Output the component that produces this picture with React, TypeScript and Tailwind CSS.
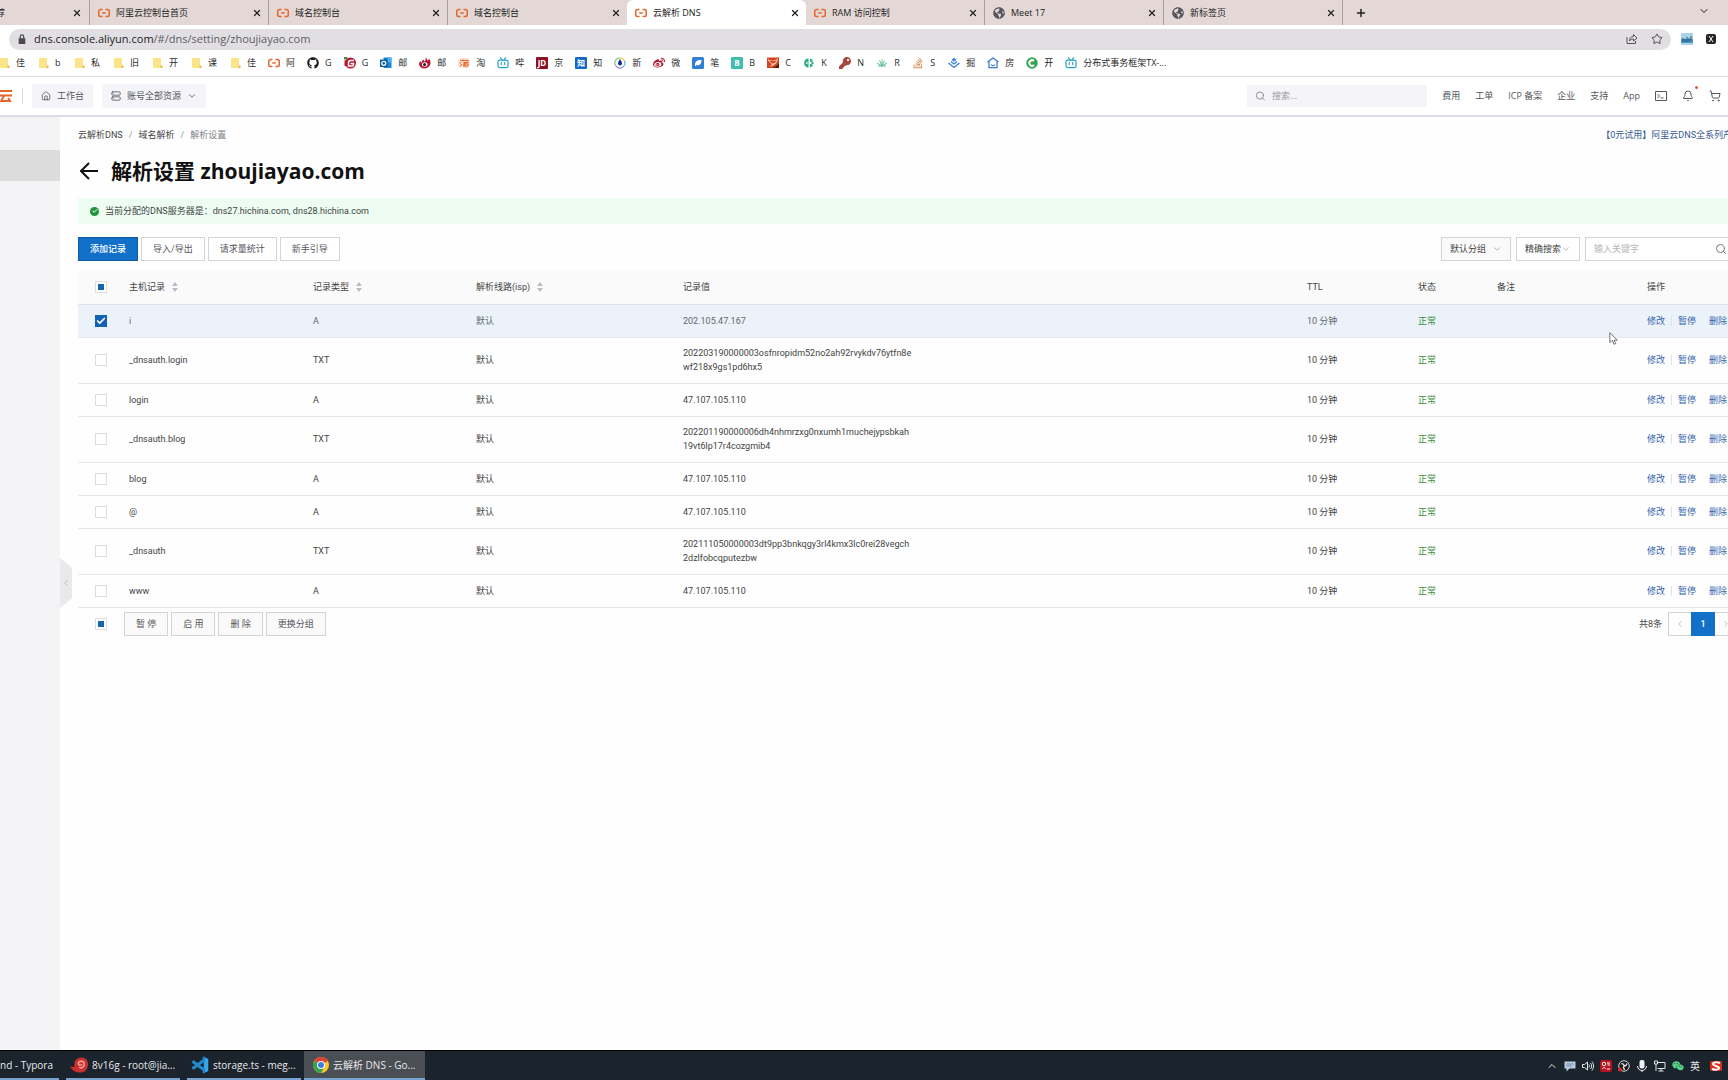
import { useState } from 'react';
import type { ReactNode } from 'react';
import {
  Bell,
  Check,
  ChevronDown,
  ChevronLeft,
  ChevronRight,
  ChevronUp,
  House,
  Plus,
  Search,
  Server,
  ShoppingCart,
  Star,
  X,
} from 'lucide-react';
import { FaGithub, FaWeibo, FaStackOverflow, FaGlobeAmericas, FaWeixin, FaKey } from 'react-icons/fa';

interface TabItem {
  title: string;
  icon: 'ali' | 'globe';
  active?: boolean;
}

interface DnsRecord {
  host: string;
  type: string;
  value: string[];
}

const TABS: TabItem[] = [
  { title: '阿里云控制台首页', icon: 'ali' },
  { title: '域名控制台', icon: 'ali' },
  { title: '域名控制台', icon: 'ali' },
  { title: '云解析 DNS', icon: 'ali', active: true },
  { title: 'RAM 访问控制', icon: 'ali' },
  { title: 'Meet 17', icon: 'globe' },
  { title: '新标签页', icon: 'globe' },
];

const RECORDS: DnsRecord[] = [
  { host: 'i', type: 'A', value: ['202.105.47.167'] },
  {
    host: '_dnsauth.login',
    type: 'TXT',
    value: ['202203190000003osfnropidm52no2ah92rvykdv76ytfn8e', 'wf218x9gs1pd6hx5'],
  },
  { host: 'login', type: 'A', value: ['47.107.105.110'] },
  {
    host: '_dnsauth.blog',
    type: 'TXT',
    value: ['202201190000006dh4nhmrzxg0nxumh1muchejypsbkah', '19vt6lp17r4cozgmib4'],
  },
  { host: 'blog', type: 'A', value: ['47.107.105.110'] },
  { host: '@', type: 'A', value: ['47.107.105.110'] },
  {
    host: '_dnsauth',
    type: 'TXT',
    value: ['202111050000003dt9pp3bnkqgy3rl4kmx3lc0rei28vegch', '2dzlfobcqputezbw'],
  },
  { host: 'www', type: 'A', value: ['47.107.105.110'] },
];

const HEADER_LINKS = ['费用', '工单', 'ICP 备案', '企业', '支持', 'App'];

function AliIcon() {
  return (
    <svg viewBox="0 0 24 24" className="size-3 shrink-0" fill="none" stroke="#e8662c" strokeWidth="3" aria-hidden="true">
      <path d="M9 5H5a3.5 3.5 0 0 0-3.5 3.5v7A3.5 3.5 0 0 0 5 19h4M15 5h4a3.5 3.5 0 0 1 3.5 3.5v7A3.5 3.5 0 0 1 19 19h-4M8.500 12h7" />
    </svg>
  );
}

function FolderIcon() {
  return (
    <svg viewBox="0 0 12 12" className="size-3 shrink-0" aria-hidden="true">
      <path d="M2 1h8v8h1v2H2z" fill="#fbe58a" />
      <path d="M9.500 8.500H11.500V11H9.500z" fill="#e3bd4e" />
    </svg>
  );
}

function BiliIcon() {
  return (
    <svg viewBox="0 0 24 24" className="size-3 shrink-0" fill="none" stroke="#2ba3c9" strokeWidth="2.500" aria-hidden="true">
      <rect x="2" y="6" width="20" height="15" rx="3" />
      <path d="M7 1.500 10 6M17 1.500 14 6M8.500 11v4M15.500 11v4" strokeLinecap="round" />
    </svg>
  );
}

// Square or round site badge with a one or two character mark
function Badge({ text, color, round = false }: { text: string; color: string; round?: boolean }) {
  return (
    <svg viewBox="0 0 12 12" className="size-3 shrink-0" aria-hidden="true">
      <rect width="12" height="12" rx={round ? 6 : 1} fill={color} />
      <text x="6" y="9" fontSize="8" fontWeight="700" fill="#fff" textAnchor="middle">
        {text}
      </text>
    </svg>
  );
}

function Glyph({ children }: { children: ReactNode }) {
  return (
    <svg viewBox="0 0 24 24" className="size-3 shrink-0" fill="none" aria-hidden="true">
      {children}
    </svg>
  );
}

const BOOKMARKS: { label: string; icon: ReactNode }[] = [
  { label: '佳', icon: <FolderIcon /> },
  { label: 'b', icon: <FolderIcon /> },
  { label: '私', icon: <FolderIcon /> },
  { label: '旧', icon: <FolderIcon /> },
  { label: '开', icon: <FolderIcon /> },
  { label: '课', icon: <FolderIcon /> },
  { label: '佳', icon: <FolderIcon /> },
  { label: '阿', icon: <AliIcon /> },
  { label: 'G', icon: <FaGithub className="size-3 shrink-0 text-[#1b1f23]" /> },
  {
    label: 'G',
    icon: (
      <Glyph>
        <circle cx="13" cy="12" r="11" fill="#b8142f" />
        <path d="M20 7h-7a4 4 0 0 0-4 4v7h7a3 3 0 0 0 3-3v-2h-6" stroke="#fff" strokeWidth="3" />
        <path d="M0 0h7v5H0z" fill="#4f8b3c" />
        <path d="M1 7h5v11H1z" fill="#b8142f" />
      </Glyph>
    ),
  },
  {
    label: '邮',
    icon: (
      <Glyph>
        <path d="M7 1h16v21H7z" fill="#1b86cf" />
        <path d="M15 1h8v10h-8z" fill="#4bb5ee" />
        <path d="M0 5h15v15H0z" fill="#0b5a9c" />
        <circle cx="7.500" cy="12.500" r="4" stroke="#fff" strokeWidth="2.500" />
      </Glyph>
    ),
  },
  {
    label: '邮',
    icon: (
      <Glyph>
        <path d="M13 1c3 2 4 4 3 7 3-2 4-3 4-5 4 5 4 12 0 16-5 5-14 5-18 0-3-4-2-8 1-11 0 2 1 3 2 4 0-4 2-6 5-7-1 2 0 3 1 4 2-2 3-4 2-8z" fill="#b31532" />
        <ellipse cx="11.500" cy="15" rx="5.500" ry="4.500" fill="#fff" />
        <circle cx="11" cy="15" r="3" fill="#2c1418" />
      </Glyph>
    ),
  },
  {
    label: '淘',
    icon: (
      <Glyph>
        <rect x="1" y="2" width="22" height="20" rx="5" fill="#fbe3d2" />
        <path d="m4 6 3 2M3 11l3 2M4 19l4-5M10 5 8 9M9 7h11v11l-3 1M11 11h7M10 14h8M14 11v7M11 16v2h6" stroke="#e4581b" strokeWidth="2" />
      </Glyph>
    ),
  },
  { label: '哔', icon: <BiliIcon /> },
  { label: '京', icon: <Badge text="JD" color="#8e1022" /> },
  { label: '知', icon: <Badge text="知" color="#1769c9" /> },
  {
    label: '新',
    icon: (
      <Glyph>
        <path d="M12 2A10 10 0 0 0 3 17" stroke="#7fc98a" strokeWidth="2.500" />
        <path d="M12 2a10 10 0 0 1 9 6" stroke="#f0cf4a" strokeWidth="2.500" />
        <path d="M21 8a10 10 0 0 1-5 13" stroke="#49b7d6" strokeWidth="2.500" />
        <path d="M3 17a10 10 0 0 0 13 4" stroke="#a66bd0" strokeWidth="2.500" />
        <path d="M12 4c3 5 4 7 4 9a4 4 0 0 1-8 0c0-2 1-4 4-9z" fill="#1d2f8f" />
      </Glyph>
    ),
  },
  { label: '微', icon: <FaWeibo className="size-3 shrink-0 text-[#b5172f]" /> },
  {
    label: '笔',
    icon: (
      <Glyph>
        <rect width="24" height="24" rx="3" fill="#2f7fd6" />
        <path d="M6 17c-1-8 5-12 13-11 0 8-5 13-10 10l-3 3z" fill="#fff" />
      </Glyph>
    ),
  },
  { label: 'B', icon: <Badge text="B" color="#3fc0ac" /> },
  {
    label: 'C',
    icon: (
      <Glyph>
        <path d="M0 1h24v21H0z" fill="#d5451b" />
        <path d="M1 3c6 6 12 6 21 0-1 7-4 11-8 13l-8 4 4-6C6 12 3 9 1 3z" fill="#fbd9c5" />
        <path d="M5 7c5 2 10 2 15-1-2 5-5 7-9 7-3-1-5-3-6-6z" fill="#d5451b" />
        <path d="M24 12v10H10c6-2 11-5 14-10z" fill="#5a1c10" />
      </Glyph>
    ),
  },
  {
    label: 'K',
    icon: (
      <Glyph>
        <path d="M11 3v18a9 9 0 0 1-9-9 9 9 0 0 1 9-9zM14 3l6 3-3 4h-3zM14 21l6-3-3-4h-3zM19 9l3 3-3 3-3-3z" fill="#27b07c" />
        <path d="M9 9v6l-4-3z" fill="#fff" />
      </Glyph>
    ),
  },
  { label: 'N', icon: <FaKey className="size-3 shrink-0 text-[#a8483c]" /> },
  {
    label: 'R',
    icon: (
      <Glyph>
        <path d="M12 18V5M12 18 7 7M12 18 17 7M12 18 2 12M12 18l10-6M4 18h16" stroke="#5cbf95" strokeWidth="2" />
      </Glyph>
    ),
  },
  { label: 'S', icon: <FaStackOverflow className="size-3 shrink-0 text-[#d98a4b]" /> },
  {
    label: '掘',
    icon: (
      <Glyph>
        <path d="m12 3 3 2.500-3 2.500-3-2.500zM6 9l6 5 6-5M1 12l11 9 11-9" stroke="#2f7fe0" strokeWidth="2.500" />
      </Glyph>
    ),
  },
  {
    label: '房',
    icon: (
      <Glyph>
        <path d="M1 10 12 2l11 8M4 9v12h16V9M8 15c2 3 6 3 8 0" stroke="#3d78c9" strokeWidth="2.500" />
      </Glyph>
    ),
  },
  {
    label: '开',
    icon: (
      <Glyph>
        <circle cx="12" cy="12" r="11.500" fill="#2fa54f" />
        <path d="M16 8a5.500 5.500 0 1 0 0 8" stroke="#fff" strokeWidth="4" />
      </Glyph>
    ),
  },
  { label: '分布式事务框架TX-...', icon: <BiliIcon /> },
];

function BrowserTabs() {
  return (
    <div className="flex h-[25px] shrink-0 items-stretch bg-[#e3d8d6] text-[#222]" role="tablist" aria-label="Browser tabs">
      <div className="flex w-[90px] shrink-0 items-center border-r border-[#a89f9e] pr-[7px]">
        <span className="-ml-1 flex-1">荐</span>
        <button aria-label="Close tab">
          <X className="size-2.5" strokeWidth={3} />
        </button>
      </div>
      {TABS.map((tab, i) => {
        const beforeActive = TABS[i + 1]?.active;
        return (
          <div
            key={i}
            role="tab"
            aria-selected={!!tab.active}
            className={`flex w-[179px] shrink-0 items-center gap-1.5 pl-2 pr-1.5 ${tab.active ? 'rounded-t-md bg-white' : ''} ${tab.active || beforeActive ? '' : 'border-r border-[#a89f9e]'}`}
          >
            {tab.icon === 'ali' ? <AliIcon /> : <FaGlobeAmericas className="size-3 shrink-0 text-[#55565a]" />}
            <span className="flex-1 truncate">{tab.title}</span>
            <button aria-label="Close tab">
              <X className="size-2.5" strokeWidth={3} />
            </button>
          </div>
        );
      })}
      <button className="ml-3 self-center" aria-label="New tab">
        <Plus className="size-3" strokeWidth={3} />
      </button>
      <button className="mr-[18px] mb-1 ml-auto self-center" aria-label="Search tabs">
        <ChevronDown className="size-3" strokeWidth={2} />
      </button>
    </div>
  );
}

function AddressBar() {
  return (
    <div className="flex h-7 shrink-0 items-center bg-white pr-[11px] pl-[9px]">
      <div className="flex h-[21px] flex-1 items-center gap-[7px] rounded-full bg-[#e1dfe3] px-2">
        <svg viewBox="0 0 12 12" className="size-2.5 shrink-0" aria-hidden="true">
          <path d="M2 5h8v7H2z" fill="#4a4a4d" />
          <path d="M4 5V3a2 2 0 0 1 4 0v2" fill="none" stroke="#4a4a4d" strokeWidth="1.500" />
        </svg>
        <span className="flex-1 text-[11px] text-[#5f6064]">
          <span className="text-[#1c1d20]">dns.console.aliyun.com</span>/#/dns/setting/zhoujiayao.com
        </span>
        <button aria-label="Share">
          <svg viewBox="0 0 24 24" className="size-3" fill="none" stroke="#55565a" strokeWidth="2" aria-hidden="true">
            <path d="M2 8v13h17v-5M7 16c0-6 3-9 8-9V3l7 7-7 6v-4c-4 0-6 1-8 4z" />
          </svg>
        </button>
        <button className="ml-1.5" aria-label="Bookmark this page">
          <Star className="size-3 text-[#4a4a4d]" />
        </button>
      </div>
      <svg viewBox="0 0 12 12" className="ml-2.5 size-3" aria-hidden="true">
        <rect width="12" height="12" fill="#a9d3e8" />
        <path d="M0 6h12v4H0z" fill="#4d9bc4" />
        <path d="M2 5v4M4 6v3M6 4v5M8 5v4M10 3v5" stroke="#1e5378" />
      </svg>
      <svg viewBox="0 0 12 12" className="ml-3 size-3" aria-hidden="true">
        <rect x="1" y="1" width="10" height="10" rx="2" fill="#22262b" />
        <path d="m4 3 4 6M8 3 4 9" stroke="#fff" />
      </svg>
    </div>
  );
}

function BookmarkBar() {
  return (
    <nav className="flex h-6 shrink-0 items-center gap-3 border-b border-[#dadadd] bg-white pb-1 text-[#2a2a2a]" aria-label="Bookmarks">
      {BOOKMARKS.map((b, i) => (
        <a key={i} href="#" className={`flex shrink-0 items-center gap-1.5 ${i === 0 ? '-ml-0.5' : ''}`}>
          {b.icon}
          <span className="min-w-1.5">{b.label}</span>
        </a>
      ))}
    </nav>
  );
}

function ConsoleHeader() {
  return (
    <header className="flex h-10 shrink-0 items-center border-b-2 border-[#dcdce4] bg-white text-[#55565c]">
      <svg viewBox="0 0 12 12" className="size-3 shrink-0" fill="none" stroke="#e8662c" strokeWidth="2" aria-hidden="true">
        <path d="M0 1h12M0 5.500h12M4 6 1 11h9M8 8l3 4" />
      </svg>
      <span className="ml-2.5 h-4 w-px bg-[#dedee2]" />
      <button className="ml-[9px] flex h-6 items-center gap-1.5 bg-[#f5f5f9] px-[9px]">
        <House className="size-2.5" />
        工作台
      </button>
      <button className="ml-[9px] flex h-6 items-center gap-1.5 bg-[#f5f5f9] px-[9px]">
        <Server className="size-2.5" />
        账号全部资源
        <ChevronDown className="size-2.5" />
      </button>
      <div className="ml-auto flex items-center gap-[15px]">
        <label className="flex h-[22px] w-[180px] items-center gap-1.5 bg-[#f5f5f9] px-2">
          <Search className="size-3 text-[#85868c]" />
          <input
            type="text"
            aria-label="搜索"
            placeholder="搜索..."
            className="w-full bg-transparent outline-none placeholder:text-[#9a9ba1]"
          />
        </label>
        {HEADER_LINKS.map((link) => (
          <a key={link} href="#">
            {link}
          </a>
        ))}
        <button aria-label="Cloud Shell">
          <svg viewBox="0 0 24 24" className="size-3" fill="none" stroke="currentColor" strokeWidth="2" aria-hidden="true">
            <path d="M1 3h22v18H1zM5 8l4 4-4 4M11 16h6" />
          </svg>
        </button>
        <button className="relative" aria-label="Notifications">
          <Bell className="size-3" />
          <span className="absolute -top-1 -right-1 size-[3px] rounded-full bg-[#dd5a3c]" />
        </button>
        <button className="mr-[7px]" aria-label="Cart">
          <ShoppingCart className="size-3" />
        </button>
      </div>
    </header>
  );
}

interface CheckboxProps {
  label: string;
  checked: boolean;
  partial?: boolean;
  onChange: () => void;
}

function Checkbox({ label, checked, partial = false, onChange }: CheckboxProps) {
  return (
    <span className="relative flex size-3 items-center justify-center">
      <input
        type="checkbox"
        aria-label={label}
        checked={checked}
        onChange={onChange}
        className={`size-3 appearance-none border ${checked ? 'border-[#1264b3] bg-[#1264b3]' : 'border-[#dcdde1] bg-white'}`}
      />
      {checked && <Check className="pointer-events-none absolute size-2.5 text-white" strokeWidth={4} />}
      {partial && <span className="pointer-events-none absolute size-1.5 bg-[#1264b3]" />}
    </span>
  );
}

function SortArrows() {
  return (
    <svg viewBox="0 0 6 10" className="h-2.5 w-1.5" fill="#bcbdc1" aria-hidden="true">
      <path d="M3 0 6 4H0zM3 10 0 6h6z" />
    </svg>
  );
}

function OutlineButton({ children, filled = false }: { children: ReactNode; filled?: boolean }) {
  return (
    <button className={`h-6 border border-[#d3d4d8] px-[11px] text-[#55565c] ${filled ? 'bg-[#fafafa]' : 'bg-white'}`}>
      {children}
    </button>
  );
}

function SelectBox({ value, className }: { value: string; className: string }) {
  return (
    <div className={`relative flex h-6 items-center border border-[#d3d4d8] ${className}`}>
      <select aria-label={value} className="h-full w-full appearance-none bg-transparent pl-2 text-[#444]">
        <option>{value}</option>
      </select>
      <ChevronDown className="pointer-events-none absolute right-2 size-2.5 text-[#a5a6ab]" />
    </div>
  );
}

function Toolbar() {
  return (
    <div className="mt-[13px] flex items-center">
      <div className="flex gap-[3px]">
        <button className="h-6 border border-[#0d5ba8] bg-[#1270c8] px-[11px] font-medium text-white">添加记录</button>
        <OutlineButton>导入/导出</OutlineButton>
        <OutlineButton>请求量统计</OutlineButton>
        <OutlineButton>新手引导</OutlineButton>
      </div>
      <div className="ml-auto flex items-center gap-[5px]">
        <SelectBox value="默认分组" className="w-[70px] bg-[#fafafa]" />
        <SelectBox value="精确搜索" className="w-16 bg-white" />
        <div className="flex h-6 w-[153px] items-center border border-[#d3d4d8] bg-white pr-2.5 pl-2">
          <input
            type="text"
            aria-label="输入关键字"
            placeholder="输入关键字"
            className="w-full min-w-0 bg-transparent outline-none placeholder:text-[#b5b6ba]"
          />
          <Search className="size-3 shrink-0 text-[#77787d]" />
        </div>
      </div>
    </div>
  );
}

interface RecordTableProps {
  selected: number[];
  onToggle: (index: number) => void;
  onToggleAll: () => void;
}

function RecordTable({ selected, onToggle, onToggleAll }: RecordTableProps) {
  const allSelected = selected.length === RECORDS.length;
  const someSelected = selected.length > 0 && !allSelected;

  return (
    <table className="mt-2.5 w-full table-fixed border-collapse text-left text-[#444]">
      <colgroup>
        <col className="w-[51px]" />
        <col className="w-[184px]" />
        <col className="w-[163px]" />
        <col className="w-[207px]" />
        <col />
        <col className="w-[111px]" />
        <col className="w-[79px]" />
        <col className="w-[150px]" />
        <col className="w-[91px]" />
      </colgroup>
      <thead>
        <tr className="h-[33px] border-b border-[#e3e4e8] bg-[#fafafa]">
          <th className="pl-[17px]">
            <Checkbox label="全选" checked={allSelected} partial={someSelected} onChange={onToggleAll} />
          </th>
          {['主机记录', '记录类型', '解析线路(isp)'].map((title) => (
            <th key={title} className="font-normal">
              <span className="flex items-center gap-[7px]">
                {title}
                <SortArrows />
              </span>
            </th>
          ))}
          {['记录值', 'TTL', '状态', '备注', '操作'].map((title) => (
            <th key={title} className="font-normal">
              {title}
            </th>
          ))}
        </tr>
      </thead>
      <tbody>
        {RECORDS.map((record, i) => {
          const isSelected = selected.includes(i);
          return (
            <tr
              key={record.host}
              className={`border-b border-[#e6e7ea] ${record.value.length > 1 ? 'h-[46px]' : 'h-[33px]'} ${isSelected ? 'bg-[#ebf2fa] text-[#66676c]' : ''}`}
            >
              <td className="pl-[17px]">
                <Checkbox label={record.host} checked={isSelected} onChange={() => onToggle(i)} />
              </td>
              <td>{record.host}</td>
              <td>{record.type}</td>
              <td>默认</td>
              <td>
                {record.value.map((line) => (
                  <div key={line}>{line}</div>
                ))}
              </td>
              <td>10 分钟</td>
              <td className="text-[#3c8f3c]">正常</td>
              <td />
              <td>
                <div className="flex items-center gap-1.5 text-[#3565ad]">
                  <a href="#">修改</a>
                  <span className="h-2.5 w-px bg-[#e0e1e5]" />
                  <a href="#">暂停</a>
                  <span className="h-2.5 w-px" />
                  <a href="#">删除</a>
                </div>
              </td>
            </tr>
          );
        })}
      </tbody>
    </table>
  );
}

function Taskbar() {
  return (
    <footer className="flex h-[30px] shrink-0 items-stretch border-t border-black bg-[#1b232c] text-[10px] text-[#e8e8ea]">
      <button className="w-[59px] overflow-hidden border-b-2 border-[#76a3cf] text-left whitespace-nowrap">nd - Typora</button>
      <button className="ml-[7px] flex w-[114px] items-center gap-1 border-b-2 border-[#76a3cf] pl-1 whitespace-nowrap">
        <svg viewBox="0 0 24 24" className="size-[18px]" fill="none" aria-hidden="true">
          <path d="M0 13c2 2 4 2 6 1-1-7 3-12 9-12 6 0 9 4 9 9 0 8-6 12-12 11-6 0-10-4-12-9z" fill="#c9302f" />
          <path d="M12 15c3 2 7 0 7-4 0-5-7-5-8-1 0 3 4 3 5 1" stroke="#f3a49b" strokeWidth="2" />
        </svg>
        8v16g - root@jia...
      </button>
      <button className="ml-[7px] flex w-[114px] items-center gap-1 border-b-2 border-[#76a3cf] pl-1 whitespace-nowrap">
        <svg viewBox="0 0 24 24" className="size-[18px]" fill="none" aria-hidden="true">
          <path d="M17 1 23 4v16l-6 3z" fill="#35a8ec" />
          <path d="M18 5 2 17M18 19 2 7" stroke="#2489ca" strokeWidth="4" />
          <path d="M17 1v5M17 18v5" stroke="#1f7fc0" strokeWidth="3" />
        </svg>
        storage.ts - meg...
      </button>
      <button className="ml-[3px] flex w-[121px] items-center gap-1 border-b-2 border-[#76a3cf] bg-[#4a4e55] pl-[9px] whitespace-nowrap">
        <svg viewBox="0 0 24 24" className="size-4" aria-hidden="true">
          <circle cx="12" cy="12" r="12" fill="#f7c92c" />
          <path d="M12 12 1.600 6A12 12 0 0 1 22.400 6z" fill="#dc4437" />
          <path d="M12 12 1.600 6A12 12 0 0 0 12 24l5-9z" fill="#38a34f" />
          <circle cx="12" cy="12" r="6" fill="#fff" />
          <circle cx="12" cy="12" r="4.500" fill="#3f7de0" />
        </svg>
        云解析 DNS - Go...
      </button>
      <div className="mr-1.5 ml-auto flex items-center gap-1.5">
        <ChevronUp className="size-3" />
        <Glyph>
          <path d="M1 3h22v14H11l-6 6v-6H1z" fill="#b9cbe0" />
          <path d="M5 8h14M5 12h10" stroke="#6f88a8" strokeWidth="2" />
        </Glyph>
        <Glyph>
          <path d="M1 9h4l6-5v16l-6-5H1zM14 9c1 2 1 4 0 6M17 6c3 4 3 8 0 12M20 3c4 6 4 12 0 18" stroke="#e8e8ea" strokeWidth="2" />
        </Glyph>
        <Glyph>
          <rect width="24" height="24" rx="4" fill="#b3141f" />
          <circle cx="8" cy="8" r="3.500" stroke="#fff" strokeWidth="2" />
          <path d="M14 6h6M15 10h5M4 18c4-4 6-4 7 0M14 18h6" stroke="#fff" strokeWidth="2" />
        </Glyph>
        <Glyph>
          <circle cx="12" cy="12" r="10.500" fill="#17191d" stroke="#d8d8da" strokeWidth="2" />
          <path d="M12 12c0-4-3-5-5-4M12 12c4 0 6-2 5-5M12 12c-2 3-1 6 2 7" stroke="#d8d8da" strokeWidth="3" />
          <circle cx="4" cy="19" r="4" fill="#d62b2b" />
        </Glyph>
        <Glyph>
          <rect x="7" y="0" width="10" height="17" rx="4" fill="#f1f1f2" />
          <path d="M3 12c1 12 17 12 18 0M12 20v4" stroke="#f1f1f2" strokeWidth="2" />
        </Glyph>
        <Glyph>
          <path d="M7 5h15v12H7M14 17v5M9 22h10M1 2h6v6H1zM4 8v14" stroke="#e8e8ea" strokeWidth="2" />
        </Glyph>
        <FaWeixin className="size-3 text-[#55cf83]" />
        <span>英</span>
        <svg viewBox="0 0 12 12" className="ml-1 size-3" fill="none" aria-hidden="true">
          <rect y="1" width="12" height="10" rx="2" fill="#d8321f" />
          <path d="M10 3C7 2 3 2 3 4s6 2 6 4-4 2-7 1" stroke="#fff" strokeWidth="2" />
        </svg>
      </div>
    </footer>
  );
}

export default function App() {
  const [selected, setSelected] = useState<number[]>([0]);

  const toggle = (index: number) => {
    setSelected((prev) => (prev.includes(index) ? prev.filter((i) => i !== index) : [...prev, index]));
  };

  const toggleAll = () => {
    setSelected((prev) => (prev.length === RECORDS.length ? [] : RECORDS.map((_, i) => i)));
  };

  const allSelected = selected.length === RECORDS.length;

  return (
    <div className="flex h-screen flex-col overflow-hidden bg-white font-['Open_Sans','Noto_Sans_CJK_SC',sans-serif] text-[9px] leading-[14px]">
      <BrowserTabs />
      <AddressBar />
      <BookmarkBar />
      <ConsoleHeader />

      <div className="flex min-h-0 flex-1 font-['Roboto','Noto_Sans_CJK_SC',sans-serif]">
        <aside className="relative w-[60px] shrink-0 bg-[#f4f4f6] pt-[33px]">
          <div className="h-[31px] bg-[#dcdcdd]" />
          <button
            className="absolute top-[441px] left-full flex h-[50px] w-3 items-center justify-center bg-[#e9e9eb] text-[#b5b6ba] [clip-path:polygon(0_0,100%_20%,100%_80%,0_100%)]"
            aria-label="Collapse menu"
          >
            <ChevronLeft className="size-2.5" />
          </button>
        </aside>

        <main className="-mr-2.5 min-w-0 flex-1 bg-[#fefefe] pt-[11px] pl-[18px]">
          <div className="flex items-center justify-between">
            <nav className="flex gap-1.5 text-[#444]" aria-label="Breadcrumb">
              <a href="#">云解析DNS</a>
              <span className="text-[#999]">/</span>
              <a href="#">域名解析</a>
              <span className="text-[#999]">/</span>
              <span className="text-[#808186]">解析设置</span>
            </nav>
            <a href="#" className="mr-1.5 whitespace-nowrap text-[#35588f]">
              【0元试用】阿里云DNS全系列产
            </a>
          </div>

          <div className="mt-[15px] flex h-7 items-center gap-[13px]">
            <button className="pl-0.5" aria-label="返回">
              <svg viewBox="0 0 18 18" className="size-[18px]" fill="none" stroke="#111" strokeWidth="2" aria-hidden="true">
                <path d="M18 9H1M9 1 1 9l8 8" />
              </svg>
            </button>
            <h1 className="font-['Open_Sans','Noto_Sans_CJK_SC',sans-serif] text-[21px] font-bold text-[#111]">
              解析设置 zhoujiayao.com
            </h1>
          </div>

          <div className="mt-[13px] flex h-[26px] items-center gap-1.5 bg-[#edfdf2] pl-3 text-[#444]">
            <span className="flex size-[9px] items-center justify-center rounded-full bg-[#23923d]">
              <Check className="size-1.5 text-white" strokeWidth={4} />
            </span>
            当前分配的DNS服务器是：dns27.hichina.com, dns28.hichina.com
          </div>

          <Toolbar />
          <RecordTable selected={selected} onToggle={toggle} onToggleAll={toggleAll} />

          <div className="mt-1 flex items-center pl-[17px]">
            <Checkbox label="全选记录" checked={allSelected} partial={selected.length > 0 && !allSelected} onChange={toggleAll} />
            <div className="ml-[17px] flex gap-[3px]">
              <OutlineButton filled>暂 停</OutlineButton>
              <OutlineButton filled>启 用</OutlineButton>
              <OutlineButton filled>删 除</OutlineButton>
              <OutlineButton filled>更换分组</OutlineButton>
            </div>
            <div className="ml-auto flex items-center -space-x-px">
              <span className="mr-1.5 text-[#444]">共8条</span>
              <button className="flex h-6 w-6 items-center justify-center border border-[#d3d4d8] text-[#b5b6ba]" aria-label="Previous page">
                <ChevronLeft className="size-2.5" />
              </button>
              <button className="relative h-6 w-6 bg-[#1270c8] font-medium text-white">1</button>
              <button className="flex h-6 w-6 items-center justify-center border border-[#d3d4d8] text-[#b5b6ba]" aria-label="Next page">
                <ChevronRight className="size-2.5" />
              </button>
            </div>
          </div>
        </main>
      </div>

      <Taskbar />

      {/* Mouse pointer over the selected row */}
      <svg viewBox="0 0 12 16" className="pointer-events-none absolute top-[331px] left-[1609px] h-[15px] w-[10px]" aria-hidden="true">
        <path d="M1 1v12l3-3 2 5 2-1-2-4h4z" fill="#fff" stroke="#55565a" />
      </svg>
    </div>
  );
}
